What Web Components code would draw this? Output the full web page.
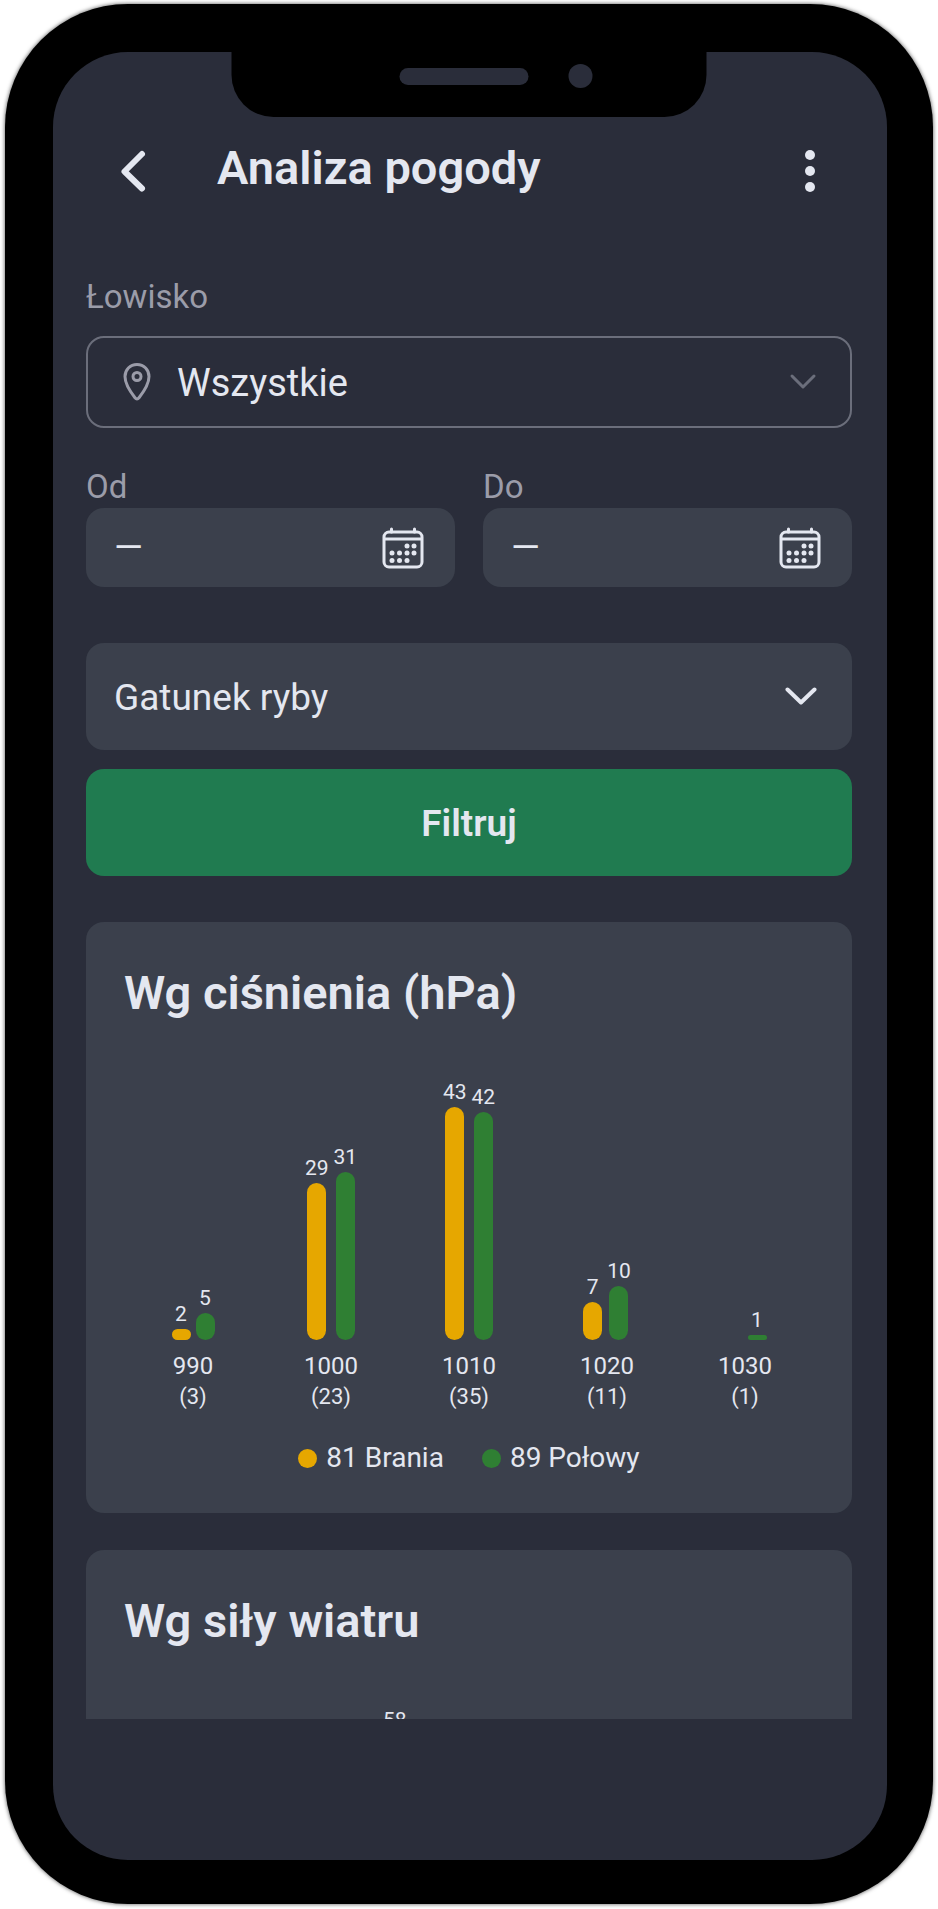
<!DOCTYPE html>
<html lang="pl">
<head>
<meta charset="utf-8">
<meta name="viewport" content="width=device-width, initial-scale=1">
<title>Analiza pogody</title>
<style>
    body {
        margin: 0;
        background: #fff;
        font-family: Roboto, "Liberation Sans", sans-serif;
        --screen: #2a2d3a;
        --surface: #3b404c;
        --text: #e4e7f0;
        --muted: #9b9ca9;
        --outline: #6b6e7b;
        --primary: #207b50;
        --bites: #e6a700;
        --catches: #2f7f33;
        --radius: 18px;
    }
</style>
</head>
<body>

<phone-frame>
    <app-header slot="header">Analiza pogody</app-header>
    <weather-filters></weather-filters>
    <chart-card
        heading="Wg ciśnienia (hPa)"
        data="990:3:2:5,1000:23:29:31,1010:35:43:42,1020:11:7:10,1030:1:0:1"
        unit="5.43"
        bites="81 Brania"
        catches="89 Połowy"></chart-card>
    <chart-card heading="Wg siły wiatru" data=":::,::0:58,:::,:::" unit="4"></chart-card>
</phone-frame>

<script>
class PhoneFrame extends HTMLElement {
    constructor() {
        super();
        this.attachShadow({mode: "open"});
        this.shadowRoot.innerHTML = `
<style>
    :host {
        display: block;
        box-sizing: border-box;
        height: 100vh;
        padding: 4px 5px 5px;
    }
    .case {
        position: relative;
        box-sizing: border-box;
        height: 100%;
        padding: 48px 46px 44px 48px;
        border-radius: 123px;
        background: #000;
        box-shadow: 0 0 4px rgba(0, 0, 0, .7);
    }
    .screen {
        display: flex;
        flex-direction: column;
        box-sizing: border-box;
        height: 100%;
        padding-bottom: 141px;
        border-radius: 75px;
        background: var(--screen);
        color: var(--text);
        overflow: hidden;
    }
    .scroll {
        flex: 1;
        min-height: 0;
        padding: 83px 35px 0 33px;
        overflow: hidden;
    }
    .notch {
        position: absolute;
        top: 47px;
        left: 50%;
        width: 475px;
        height: 66px;
        transform: translateX(-50%);
        border-radius: 0 0 42px 42px;
        background: #000;
    }
    .speaker, .camera {
        position: absolute;
        background: var(--screen);
    }
    .speaker {
        top: 17px;
        left: 168px;
        width: 129px;
        height: 17px;
        border-radius: 9px;
    }
    .camera {
        top: 13px;
        left: 337px;
        width: 24px;
        height: 24px;
        border-radius: 50%;
    }
</style>
<div class="case">
    <div class="screen">
        <slot name="header"></slot>
        <main class="scroll"><slot></slot></main>
    </div>
    <div class="notch">
        <div class="speaker"></div>
        <div class="camera"></div>
    </div>
</div>
`;
    }
}

class AppHeader extends HTMLElement {
    constructor() {
        super();
        this.attachShadow({mode: "open"});
        this.shadowRoot.innerHTML = `
<style>
    :host {
        display: flex;
        align-items: flex-end;
        padding: 89px 53px 0 56px;
    }
    button {
        flex: none;
        width: 48px;
        height: 48px;
        padding: 0;
        border: 0;
        background: none;
        color: inherit;
    }
    svg {
        display: block;
    }
    h1 {
        flex: 1;
        margin: 0 0 0 60px;
        font-size: 47px;
        line-height: 54px;
        font-weight: 600;
    }
</style>
<button type="button" aria-label="Wstecz">
    <svg width="48" height="48" viewBox="0 0 48 48" fill="none" stroke="currentColor" stroke-width="6" stroke-linecap="round" stroke-linejoin="round"><path d="M33 7 15.500 24.500 33 41.500"/></svg>
</button>
<h1><slot></slot></h1>
<button type="button" aria-label="Menu">
    <svg width="48" height="48" viewBox="0 0 48 48" fill="currentColor"><circle cx="24" cy="8" r="5"/><circle cx="24" cy="24" r="5"/><circle cx="24" cy="40" r="5"/></svg>
</button>
`;
    }
}

class SelectField extends HTMLElement {
    constructor() {
        super();
        this.attachShadow({mode: "open"});
    }

    connectedCallback() {
        let label = this.getAttribute('label');
        let value = this.getAttribute('value');
        let outlined = this.hasAttribute('outlined');
        let pin = `<svg class="pin" width="30" height="40" viewBox="0 0 30 40" fill="none" stroke="currentColor" stroke-width="3" stroke-linejoin="round"><path d="M15 2.500C8 2.500 3 7.800 3 14.500c0 7.500 5.500 15.500 10 21.200q2 2.500 4 0C21.500 30 27 22 27 14.500 27 7.800 22 2.500 15 2.500Z"/><circle cx="15" cy="14.500" r="4"/></svg>`;
        let small = `<svg class="arrow" width="32" height="32" viewBox="0 0 32 32" fill="none" stroke="currentColor" stroke-width="3" stroke-linecap="round" stroke-linejoin="round"><path d="M5 10 16 21 27 10"/></svg>`;
        let large = `<svg class="arrow" width="32" height="32" viewBox="0 0 32 32" fill="none" stroke="currentColor" stroke-width="4" stroke-linecap="round" stroke-linejoin="round"><path d="M2.500 8.500 16 21.500 29.500 8.500"/></svg>`;

        this.shadowRoot.innerHTML = `
<style>
    :host {
        display: block;
    }
    label {
        display: block;
        margin-bottom: 20px;
        font-size: 33px;
        line-height: 38px;
        color: var(--muted);
    }
    .box {
        display: flex;
        align-items: center;
        box-sizing: border-box;
        height: 107px;
        padding: 0 35px 0 28px;
        border-radius: var(--radius);
        background: var(--surface);
    }
    .box.outlined {
        height: 92px;
        padding: 0 31px 0 34px;
        border: 2px solid var(--outline);
        background: none;
    }
    .pin {
        margin-right: 25px;
        color: var(--muted);
    }
    .outlined .arrow {
        color: var(--outline);
    }
    svg {
        flex: none;
        pointer-events: none;
    }
    select {
        flex: 1;
        min-width: 0;
        height: 100%;
        padding: 2px 0 0;
        border: 0;
        background: none;
        color: inherit;
        font: inherit;
        font-size: 37px;
        appearance: none;
        outline: none;
    }
    .outlined select {
        font-size: 38px;
    }
</style>
${outlined ? `<label for="field">${label}</label>` : ''}
<div class="box ${outlined ? 'outlined' : ''}">
    ${outlined ? pin : ''}
    <select id="field" aria-label="${label}"><option>${value}</option></select>
    ${outlined ? small : large}
</div>
`;
    }
}

class DateField extends HTMLElement {
    constructor() {
        super();
        this.attachShadow({mode: "open"});
    }

    connectedCallback() {
        this.shadowRoot.innerHTML = `
<style>
    :host {
        display: block;
        min-width: 0;
    }
    label {
        display: block;
        margin-bottom: 2px;
        font-size: 33px;
        line-height: 38px;
        color: var(--muted);
    }
    .box {
        display: flex;
        align-items: center;
        height: 79px;
        padding: 0 31px 0 28px;
        border-radius: var(--radius);
        background: var(--surface);
    }
    input {
        flex: 1;
        min-width: 0;
        padding: 0;
        border: 0;
        background: none;
        color: inherit;
        font: inherit;
        font-size: 37px;
        outline: none;
    }
    button {
        flex: none;
        padding: 0;
        border: 0;
        background: none;
        color: inherit;
    }
    svg {
        display: block;
    }
</style>
<label for="date">${this.getAttribute('label')}</label>
<div class="box">
    <input id="date" type="text" value="—" readonly>
    <button type="button" aria-label="Wybierz datę">
        <svg width="42" height="42" viewBox="0 0 42 42" fill="none" stroke="currentColor" stroke-width="3" stroke-linecap="round">
            <rect x="2" y="5" width="38" height="35" rx="5"/>
            <path d="M3 12H39M9.500 2V5M32.500 2V5"/>
            <g fill="currentColor" stroke="none">
                <circle cx="25" cy="19" r="2.500"/><circle cx="32" cy="19" r="2.500"/>
                <circle cx="10" cy="26" r="2.500"/><circle cx="17.500" cy="26" r="2.500"/><circle cx="25" cy="26" r="2.500"/><circle cx="32" cy="26" r="2.500"/>
                <circle cx="10" cy="33.500" r="2.500"/><circle cx="17.500" cy="33.500" r="2.500"/><circle cx="25" cy="33.500" r="2.500"/>
            </g>
        </svg>
    </button>
</div>
`;
    }
}

class WeatherFilters extends HTMLElement {
    constructor() {
        super();
        this.attachShadow({mode: "open"});
        this.shadowRoot.innerHTML = `
<style>
    :host {
        display: block;
    }
    .dates {
        display: grid;
        grid-template-columns: 1fr 1fr;
        gap: 28px;
        margin: 40px 0 56px;
    }
    button {
        display: block;
        width: 100%;
        height: 107px;
        margin-top: 19px;
        padding: 2px 0 0;
        border: 0;
        border-radius: var(--radius);
        background: var(--primary);
        color: inherit;
        font: inherit;
        font-size: 37px;
        font-weight: 600;
    }
</style>
<form>
    <select-field label="Łowisko" value="Wszystkie" outlined></select-field>
    <div class="dates">
        <date-field label="Od"></date-field>
        <date-field label="Do"></date-field>
    </div>
    <select-field label="Gatunek ryby" value="Gatunek ryby"></select-field>
    <button type="submit">Filtruj</button>
</form>
`;
        this.shadowRoot.querySelector('form').addEventListener('submit', (e) => {
            e.preventDefault();
        });
    }
}

class ChartCard extends HTMLElement {
    constructor() {
        super();
        this.attachShadow({mode: "open"});
    }

    connectedCallback() {
        let unit = Number(this.getAttribute('unit'));
        let groups = this.getAttribute('data').split(',').map( (group) => this.createGroup(group, unit) ).join('');
        let bites = this.getAttribute('bites');
        let catches = this.getAttribute('catches');
        let legend = bites ? `<div class="legend"><span class="bites">${bites}</span><span class="catches">${catches}</span></div>` : '';

        this.shadowRoot.innerHTML = `
<style>
    :host {
        display: block;
        margin-top: 46px;
        padding: 44px 38px 38px;
        border-radius: var(--radius);
        background: var(--surface);
    }
    :host(:last-of-type) {
        margin-top: 37px;
    }
    h2 {
        margin: 0 0 60px;
        font-size: 47px;
        line-height: 54px;
        font-weight: 600;
    }
    .plot {
        display: grid;
        grid-auto-flow: column;
        grid-auto-columns: 1fr;
        align-items: end;
        text-align: center;
    }
    .pair {
        display: flex;
        justify-content: center;
        align-items: flex-end;
        gap: 5px;
        margin-bottom: 12px;
    }
    .value {
        display: flex;
        flex-direction: column;
        align-items: center;
        gap: 3px;
        min-width: 19px;
        font-size: 21px;
        line-height: 24px;
    }
    .bar {
        width: 19px;
        border-radius: 10px;
    }
    .bites .bar, .legend .bites::before {
        background: var(--bites);
    }
    .catches .bar, .legend .catches::before {
        background: var(--catches);
    }
    .name {
        font-size: 24px;
        line-height: 28px;
    }
    .count {
        margin-top: 4px;
        font-size: 22px;
        line-height: 26px;
    }
    .legend {
        display: flex;
        justify-content: center;
        gap: 38px;
        margin-top: 31px;
        font-size: 28px;
        line-height: 34px;
    }
    .legend span {
        display: flex;
        align-items: center;
        gap: 9px;
    }
    .legend span::before {
        content: "";
        width: 19px;
        height: 19px;
        border-radius: 50%;
    }
</style>
<h2>${this.getAttribute('heading')}</h2>
<div class="plot">${groups}</div>
${legend}
`;
    }

    createGroup(group, unit) {
        let [name, count, bites, catches] = group.split(':');
        return `
<div class="group">
    <div class="pair">${this.createBar('bites', Number(bites), unit)}${this.createBar('catches', Number(catches), unit)}</div>
    ${name ? `<div class="name">${name}</div>` : ''}
    ${count ? `<div class="count">(${count})</div>` : ''}
</div>`;
    }

    createBar(type, value, unit) {
        if (!value) {
            return `<div class="value ${type}"></div>`;
        }
        return `<div class="value ${type}"><span>${value}</span><div class="bar" style="height: ${Math.round(value * unit)}px"></div></div>`;
    }
}

window.customElements.define('phone-frame', PhoneFrame);
window.customElements.define('app-header', AppHeader);
window.customElements.define('select-field', SelectField);
window.customElements.define('date-field', DateField);
window.customElements.define('weather-filters', WeatherFilters);
window.customElements.define('chart-card', ChartCard);
</script>
</body>
</html>
